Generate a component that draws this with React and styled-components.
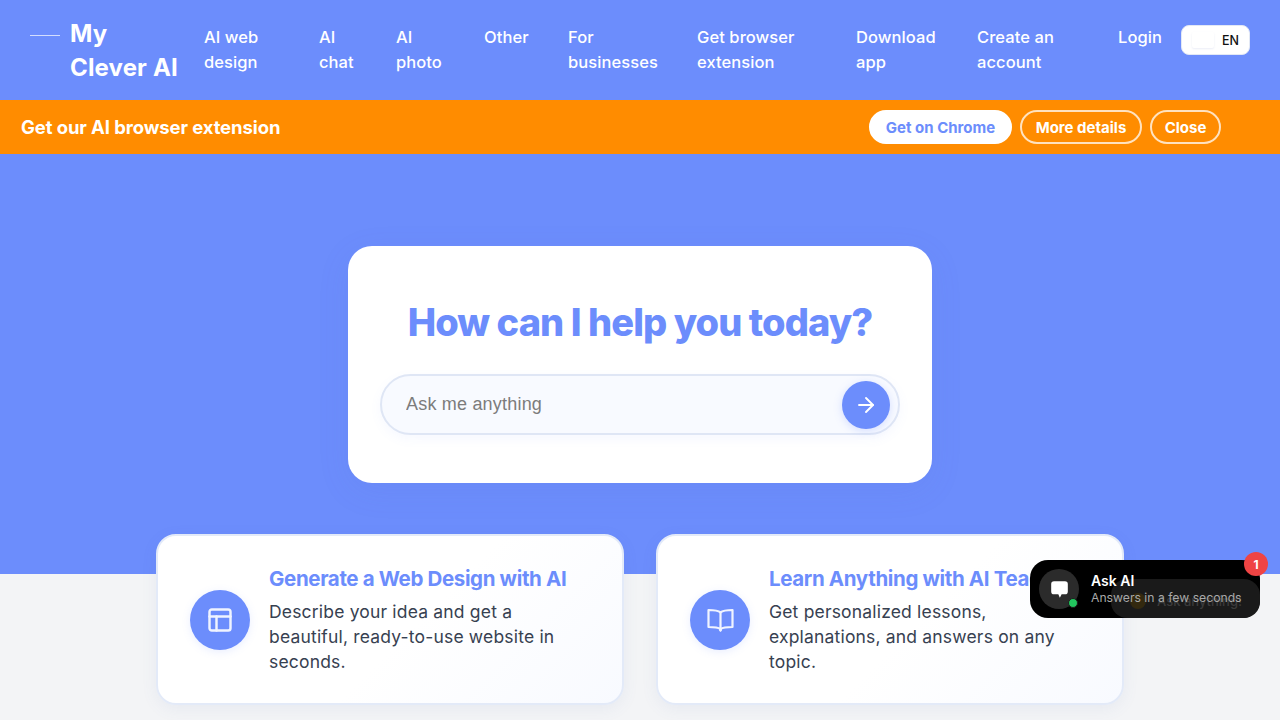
import React from "react";
import styled, { createGlobalStyle } from "styled-components";
import { ArrowRight, PanelsTopLeft } from "lucide-react";

const SANS = `"Inter", "Noto Sans", sans-serif`;
const BLUE = "#6c8dfc";

const Global = createGlobalStyle`
  html, body { margin: 0; padding: 0; background: #f3f4f6; overflow: hidden; }
  body { font-family: ${SANS}; height: 720px; }
  * { box-sizing: border-box; }
`;

const Page = styled.div`
  position: relative;
  width: 1280px;
  height: 720px;
  overflow: hidden;
`;

const Header = styled.header`
  height: 100px;
  background: ${BLUE};
  display: flex;
  align-items: flex-start;
  padding: 17px 30px 0;
  color: #fff;
`;

const Logo = styled.div`
  display: flex;
  width: 174px;
  gap: 10px;
  flex: none;
`;

const LogoMark = styled.span`
  flex: none;
  width: 30px;
  height: 1px;
  margin-top: 18px;
  background: rgba(255, 255, 255, 0.7);
`;

const LogoText = styled.div`
  font-size: 24px;
  font-weight: 700;
  line-height: 34px;
  letter-spacing: 0.15px;
  white-space: nowrap;
`;

const Nav = styled.nav`
  display: grid;
  grid-template-columns: 115px 77px 88px 84px 129px 159px 121px 141px 63px;
  padding-top: 8px;
`;

const NavLink = styled.a`
  font-size: 16.5px;
  font-weight: 450;
  line-height: 25px;
  letter-spacing: 0.08px;
  white-space: pre-line;
`;

const Lang = styled.button`
  margin-top: 8px;
  width: 69px;
  height: 30px;
  flex: none;
  display: flex;
  align-items: center;
  gap: 8px;
  padding: 0 0 0 10px;
  background: #fff;
  border: 1px solid #e2e8f5;
  border-radius: 8px;
  font-family: ${SANS};
  font-size: 12.5px;
  font-weight: 500;
  color: #111;
`;

const Flag = styled.span`
  width: 22px;
  height: 16px;
  border-radius: 2px;
  background: #fff;
  box-shadow: 0 1px 2px rgba(90, 110, 180, 0.12);
`;

const Banner = styled.div`
  height: 54px;
  background: #ff8c00;
  display: flex;
  align-items: center;
  padding: 0 59px 0 21px;
  color: #fff;
`;

const BannerText = styled.strong`
  font-size: 18.5px;
  font-weight: 700;
  letter-spacing: -0.1px;
  margin-right: auto;
`;

const BannerActions = styled.div`
  display: flex;
  gap: 8px;
`;

const Pill = styled.button`
  height: 34px;
  width: ${(p) => p.$w}px;
  padding: 0;
  border-radius: 999px;
  font-family: ${SANS};
  font-size: 15px;
  font-weight: 700;
  border: 2px solid ${(p) => (p.$solid ? "#fff" : "rgba(255,255,255,0.75)")};
  background: ${(p) => (p.$solid ? "#fff" : "transparent")};
  color: ${(p) => (p.$solid ? BLUE : "#fff")};
`;

const Hero = styled.section`
  height: 420px;
  background: ${BLUE};
  padding-top: 92px;
  display: flex;
  justify-content: center;
  align-items: flex-start;
`;

const SearchCard = styled.div`
  width: 584px;
  height: 237px;
  background: #fff;
  border-radius: 24px;
  padding: 50px 32px 0;
  box-shadow: 0 8px 32px rgba(90, 110, 200, 0.1);
`;

const Title = styled.h1`
  margin: 0 0 26px;
  text-align: center;
  font-size: 38px;
  line-height: 52px;
  font-weight: 800;
  letter-spacing: -0.92px;
  color: ${BLUE};
  white-space: nowrap;
`;

const SearchBox = styled.div`
  height: 61px;
  border-radius: 999px;
  border: 2px solid #dfe6f5;
  background: #f8faff;
  display: flex;
  align-items: center;
  padding: 0 8px 0 22px;
  box-shadow: 0 4px 12px rgba(107, 140, 255, 0.06);
`;

const SearchInput = styled.input`
  flex: 1;
  min-width: 0;
  border: 0;
  outline: 0;
  background: transparent;
  font-family: "Liberation Sans", Arial, sans-serif;
  font-size: 18px;
  letter-spacing: 0.2px;
  color: #333;
  &::placeholder { color: #7c7c7c; opacity: 1; }
`;

const SendButton = styled.button`
  width: 48px;
  height: 48px;
  flex: none;
  border: 0;
  padding: 0;
  border-radius: 50%;
  background: ${BLUE};
  color: #fff;
  display: flex;
  align-items: center;
  justify-content: center;
  box-shadow: 0 2px 8px rgba(107, 140, 255, 0.25);
`;

const Features = styled.section`
  display: flex;
  justify-content: center;
  gap: 32px;
  margin-top: -40px;
`;

const FeatureCard = styled.article`
  width: 468px;
  height: 171px;
  border-radius: 20px;
  border: 2px solid #e3eaf8;
  background: linear-gradient(135deg, #fff 55%, #f8faff 100%);
  display: flex;
  align-items: center;
  gap: 19px;
  padding: 0 32px;
  box-shadow: 0 4px 16px rgba(90, 110, 180, 0.08);
`;

const FeatureIcon = styled.div`
  width: 60px;
  height: 60px;
  flex: none;
  border-radius: 50%;
  background: ${BLUE};
  color: #f0f4ff;
  display: flex;
  align-items: center;
  justify-content: center;
  box-shadow: 0 2px 8px rgba(107, 140, 255, 0.15);
`;

const FeatureBody = styled.div`
  min-width: 0;
  flex: 1;
`;

const FeatureTitle = styled.h3`
  margin: 0 0 6px;
  font-size: 20.5px;
  line-height: 28px;
  font-weight: 700;
  letter-spacing: -0.36px;
  color: ${BLUE};
  white-space: nowrap;
`;

const FeatureText = styled.p`
  margin: 0;
  font-size: 17.5px;
  line-height: 25px;
  letter-spacing: 0.18px;
  color: #374151;
  white-space: pre-line;
`;

const ChatWidget = styled.div`
  position: absolute;
  left: 1030px;
  top: 560px;
  width: 230px;
  height: 58px;
  border-radius: 18px;
  background: #000;
  display: flex;
  align-items: center;
  padding-left: 9px;
`;

const Teaser = styled.div`
  position: absolute;
  left: 81px;
  top: 19px;
  width: 149px;
  height: 39px;
  display: flex;
  align-items: center;
  gap: 11px;
  padding: 5px 0 0 19px;
  border-radius: 16px;
  background: #1a1a1a;
  color: #3c3c3c;
  font-size: 13px;
  font-weight: 500;
  white-space: nowrap;
`;

const TeaserEmoji = styled.span`
  width: 16px;
  height: 16px;
  flex: none;
  border-radius: 50%;
  background: #33290f;
`;

const ChatContent = styled.div`
  position: relative;
  display: flex;
  align-items: center;
  gap: 12px;
`;

const Avatar = styled.div`
  position: relative;
  width: 40px;
  height: 40px;
  flex: none;
  border-radius: 50%;
  background: #2b2b2b;
  color: #fff;
  display: flex;
  align-items: center;
  justify-content: center;
`;

const OnlineDot = styled.span`
  position: absolute;
  right: 1px;
  bottom: 1px;
  width: 10px;
  height: 10px;
  border-radius: 50%;
  background: #22c55e;
  border: 1px solid #1c1c1c;
`;

const ChatName = styled.div`
  color: #fff;
  font-size: 14px;
  font-weight: 600;
  line-height: 17px;
`;

const ChatSub = styled.div`
  color: #a8a8a8;
  font-size: 12.2px;
  line-height: 17px;
  white-space: nowrap;
`;

const Badge = styled.span`
  position: absolute;
  left: 1244px;
  top: 552px;
  width: 24px;
  height: 24px;
  border-radius: 50%;
  background: #ef4444;
  color: #fff;
  font-size: 12px;
  font-weight: 700;
  display: flex;
  align-items: center;
  justify-content: center;
`;

const BookIcon = () => (
  <svg width="27" height="27" viewBox="0 0 27 27" fill="none" stroke="currentColor" strokeWidth="2.2" strokeLinejoin="round">
    <path d="M13.5 6.4C11.6 4.8 9 4 1.5 4v17c7.5 0 10 .6 12 2 2-1.4 4.5-2 12-2V4c-7.5 0-10.100.8-12 2.400z" />
    <path d="M13.5 6.4V23" />
    <path d="M12.100 23h2.800v1.800l-1.400 1.200-1.400-1.200z" fill="currentColor" stroke="none" />
  </svg>
);

const ChatBubble = () => (
  <svg width="19" height="19" viewBox="0 0 16 16" fill="currentColor">
    <path d="M3.400 1h9.200A2.400 2.400 0 0 1 15 3.400v6.200a2.400 2.400 0 0 1-2.400 2.400H9.800L8.300 15 7 12H3.400A2.400 2.400 0 0 1 1 9.600V3.400A2.400 2.400 0 0 1 3.400 1z" />
  </svg>
);

const navItems = [
  "AI web\ndesign", "AI\nchat", "AI\nphoto", "Other", "For\nbusinesses",
  "Get browser\nextension", "Download\napp", "Create an\naccount", "Login",
];

export default function App() {
  return (
    <Page>
      <Global />
      <Header>
        <Logo>
          <LogoMark />
          <LogoText>My<br />Clever AI</LogoText>
        </Logo>
        <Nav>
          {navItems.map((item) => <NavLink key={item}>{item}</NavLink>)}
        </Nav>
        <Lang><Flag />EN</Lang>
      </Header>
      <Banner>
        <BannerText>Get our AI browser extension</BannerText>
        <BannerActions>
          <Pill $solid $w={143}>Get on Chrome</Pill>
          <Pill $w={122}>More details</Pill>
          <Pill $w={71}>Close</Pill>
        </BannerActions>
      </Banner>
      <Hero>
        <SearchCard>
          <Title>How can I help you today?</Title>
          <SearchBox>
            <SearchInput placeholder="Ask me anything" />
            <SendButton aria-label="Send"><ArrowRight size={24} strokeWidth={1.9} /></SendButton>
          </SearchBox>
        </SearchCard>
      </Hero>
      <Features>
        <FeatureCard>
          <FeatureIcon><PanelsTopLeft size={28} strokeWidth={2.1} /></FeatureIcon>
          <FeatureBody>
            <FeatureTitle>Generate a Web Design with AI</FeatureTitle>
            <FeatureText>{"Describe your idea and get a\nbeautiful, ready-to-use website in\nseconds."}</FeatureText>
          </FeatureBody>
        </FeatureCard>
        <FeatureCard>
          <FeatureIcon><BookIcon /></FeatureIcon>
          <FeatureBody>
            <FeatureTitle>Learn Anything with AI Teacher</FeatureTitle>
            <FeatureText>{"Get personalized lessons,\nexplanations, and answers on any\ntopic."}</FeatureText>
          </FeatureBody>
        </FeatureCard>
      </Features>
      <ChatWidget>
        <Teaser><TeaserEmoji />Ask anything!</Teaser>
        <ChatContent>
          <Avatar><ChatBubble /><OnlineDot /></Avatar>
          <div>
            <ChatName>Ask AI</ChatName>
            <ChatSub>Answers in a few seconds</ChatSub>
          </div>
        </ChatContent>
      </ChatWidget>
      <Badge>1</Badge>
    </Page>
  );
}
